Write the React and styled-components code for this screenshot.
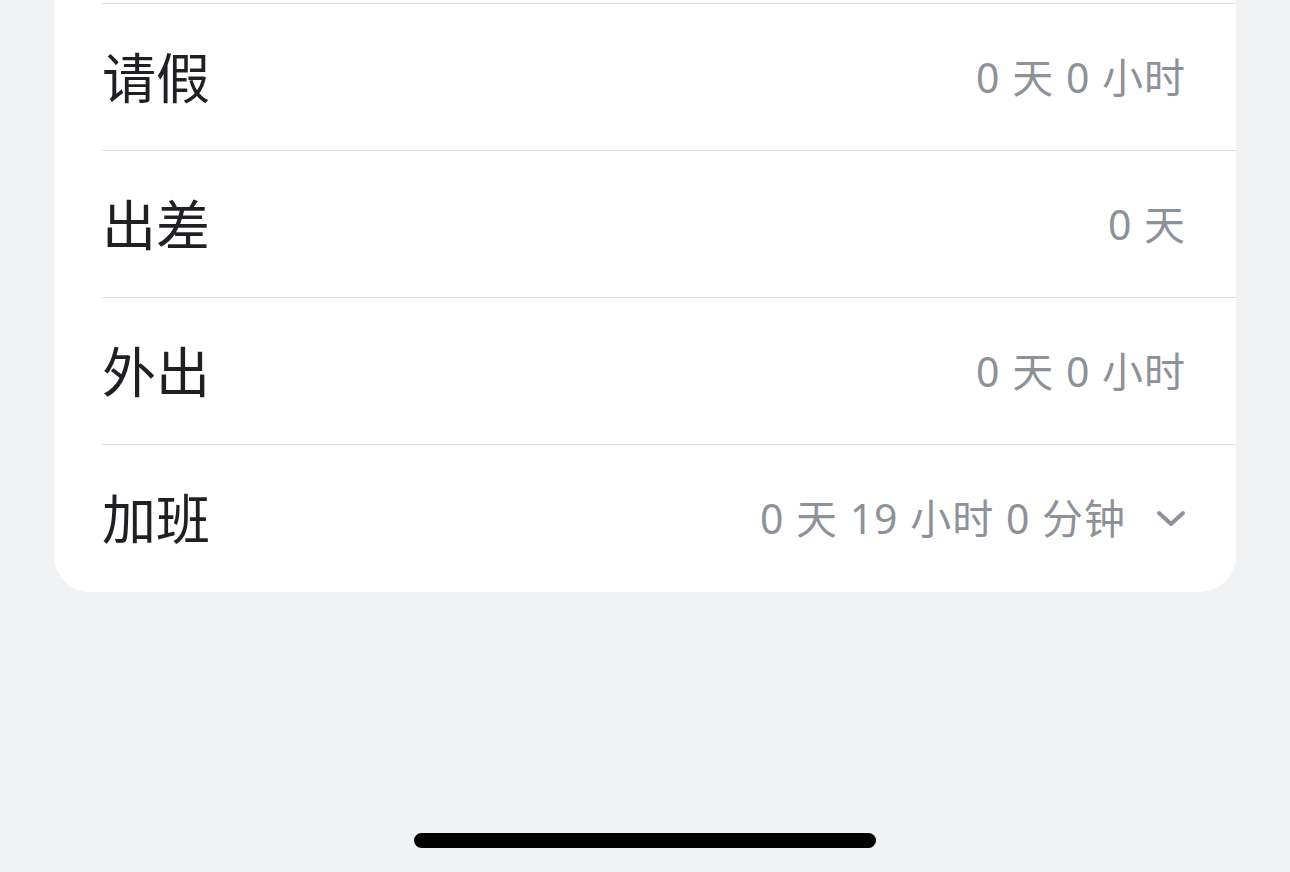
import React from "react";
import styled, { createGlobalStyle } from "styled-components";

const Global = createGlobalStyle`
  html, body { margin: 0; padding: 0; background: #f1f2f4; }
  body { font-family: "Noto Sans CJK SC", "Noto Sans", sans-serif; }
`;

const Page = styled.div`
  width: 1290px;
  height: 872px;
  background: #f1f2f4;
  display: flex;
  flex-direction: column;
  overflow: hidden;
`;

const Card = styled.div`
  margin: 0 54px;
  padding-top: 3px;
  background: #ffffff;
  border-radius: 0 0 36px 36px;
  display: flex;
  flex-direction: column;
`;

const Row = styled.div`
  box-sizing: border-box;
  height: ${(p) => (p.$last ? 148 : 147)}px;
  margin-left: 48px;
  padding-right: 50px;
  border-top: 1.5px solid #dcdde0;
  display: flex;
  align-items: center;
  justify-content: space-between;
`;

const Label = styled.span`
  font-size: 54px;
  color: #1f2023;
  line-height: 1;
  margin-top: -3px;
`;

const Value = styled.span`
  display: flex;
  align-items: center;
  gap: 30px;
  font-family: "Noto Sans", "Noto Sans CJK SC", sans-serif;
  font-size: 41px;
  letter-spacing: 1px;
  color: #8e9197;
  line-height: 1;
  white-space: pre;
`;

const Spacer = styled.div`
  flex: 1;
`;

const HomeBar = styled.div`
  align-self: center;
  width: 462px;
  height: 15px;
  border-radius: 8px;
  background: #000;
  margin-bottom: 24px;
`;

const Chevron = () => (
  <svg width="30" height="18" viewBox="0 0 30 18">
    <path d="M3 3 L15 14 L27 3" fill="none" stroke="#8e9197" strokeWidth="4" strokeLinecap="round" strokeLinejoin="round" />
  </svg>
);

const rows = [
  { label: "请假", value: "0 天 0 小时" },
  { label: "出差", value: "0 天" },
  { label: "外出", value: "0 天 0 小时" },
  { label: "加班", value: "0 天 19 小时 0 分钟", chevron: true },
];

export default function App() {
  return (
    <Page>
      <Global />
      <Card>
        {rows.map((r, i) => (
          <Row key={r.label} $last={i === rows.length - 1}>
            <Label>{r.label}</Label>
            <Value>
              <span>{r.value}</span>
              {r.chevron && <Chevron />}
            </Value>
          </Row>
        ))}
      </Card>
      <Spacer />
      <HomeBar />
    </Page>
  );
}
